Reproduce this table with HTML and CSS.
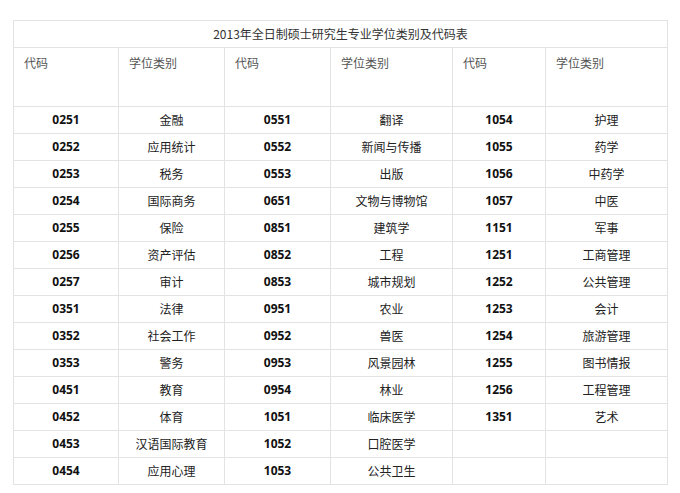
FILE: index.html
```html
<!DOCTYPE html>
<html lang="zh-CN">
<head>
<meta charset="utf-8">
<link rel="stylesheet" href="styles.css">
</head>
<body>
<div class="page">
<table class="codes">
<colgroup>
<col class="c1"><col class="c2"><col class="c3"><col class="c4"><col class="c5"><col class="c6">
</colgroup>
<tr class="title-row"><td colspan="6">2013年全日制硕士研究生专业学位类别及代码表</td></tr>
<tr class="head-row"><td>代码</td><td>学位类别</td><td>代码</td><td>学位类别</td><td>代码</td><td>学位类别</td></tr>
<tr><td class="code">0251</td><td>金融</td><td class="code">0551</td><td>翻译</td><td class="code">1054</td><td>护理</td></tr>
<tr><td class="code">0252</td><td>应用统计</td><td class="code">0552</td><td>新闻与传播</td><td class="code">1055</td><td>药学</td></tr>
<tr><td class="code">0253</td><td>税务</td><td class="code">0553</td><td>出版</td><td class="code">1056</td><td>中药学</td></tr>
<tr><td class="code">0254</td><td>国际商务</td><td class="code">0651</td><td>文物与博物馆</td><td class="code">1057</td><td>中医</td></tr>
<tr><td class="code">0255</td><td>保险</td><td class="code">0851</td><td>建筑学</td><td class="code">1151</td><td>军事</td></tr>
<tr><td class="code">0256</td><td>资产评估</td><td class="code">0852</td><td>工程</td><td class="code">1251</td><td>工商管理</td></tr>
<tr><td class="code">0257</td><td>审计</td><td class="code">0853</td><td>城市规划</td><td class="code">1252</td><td>公共管理</td></tr>
<tr><td class="code">0351</td><td>法律</td><td class="code">0951</td><td>农业</td><td class="code">1253</td><td>会计</td></tr>
<tr><td class="code">0352</td><td>社会工作</td><td class="code">0952</td><td>兽医</td><td class="code">1254</td><td>旅游管理</td></tr>
<tr><td class="code">0353</td><td>警务</td><td class="code">0953</td><td>风景园林</td><td class="code">1255</td><td>图书情报</td></tr>
<tr><td class="code">0451</td><td>教育</td><td class="code">0954</td><td>林业</td><td class="code">1256</td><td>工程管理</td></tr>
<tr><td class="code">0452</td><td>体育</td><td class="code">1051</td><td>临床医学</td><td class="code">1351</td><td>艺术</td></tr>
<tr><td class="code">0453</td><td>汉语国际教育</td><td class="code">1052</td><td>口腔医学</td><td></td><td></td></tr>
<tr><td class="code">0454</td><td>应用心理</td><td class="code">1053</td><td>公共卫生</td><td></td><td></td></tr>
</table>
</div>
</body>
</html>
```
FILE: styles.css
```css
html, body {
  margin: 0;
  padding: 0;
  background: #ffffff;
}
.page {
  padding: 20px 12px 0 13px;
}
.codes {
  border-collapse: collapse;
  table-layout: fixed;
  width: 654px;
  font-family: "Noto Sans CJK SC", "Noto Sans", sans-serif;
  font-size: 12px;
  color: #222;
}
.c1 { width: 105px; }
.c2 { width: 106px; }
.c3 { width: 106px; }
.c4 { width: 122px; }
.c5 { width: 93px; }
.c6 { width: 122px; }
.codes td {
  border: 1px solid #e3e3e3;
  height: 26px;
  padding: 0 4px;
  text-align: center;
  vertical-align: middle;
  line-height: 16px;
  white-space: nowrap;
}
.codes .title-row td {
  color: #333;
  height: 26px;
}
.codes .head-row td {
  height: 51px;
  text-align: left;
  vertical-align: top;
  padding: 7px 10px 0;
  color: #555;
}
.codes td.code {
  font-weight: bold;
  font-family: "Open Sans", "Noto Sans", sans-serif;
  color: #111;
}
```
